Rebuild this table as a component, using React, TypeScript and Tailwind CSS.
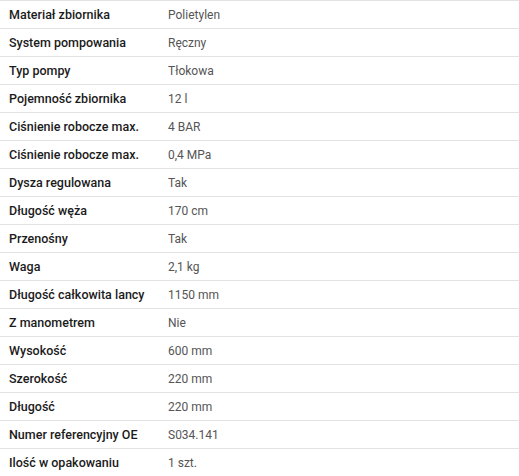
const specs: [string, string][] = [
  ["Materiał zbiornika", "Polietylen"],
  ["System pompowania", "Ręczny"],
  ["Typ pompy", "Tłokowa"],
  ["Pojemność zbiornika", "12 l"],
  ["Ciśnienie robocze max.", "4 BAR"],
  ["Ciśnienie robocze max.", "0,4 MPa"],
  ["Dysza regulowana", "Tak"],
  ["Długość węża", "170 cm"],
  ["Przenośny", "Tak"],
  ["Waga", "2,1 kg"],
  ["Długość całkowita lancy", "1150 mm"],
  ["Z manometrem", "Nie"],
  ["Wysokość", "600 mm"],
  ["Szerokość", "220 mm"],
  ["Długość", "220 mm"],
  ["Numer referencyjny OE", "S034.141"],
  ["Ilość w opakowaniu", "1 szt."],
]

export default function App() {
  return (
    <div className="w-[519px] bg-white font-['Roboto',sans-serif] text-[12px]">
      {specs.map(([label, value], i) => (
        <div key={i} className="grid h-[28px] grid-cols-[159px_1fr] items-center border-t border-[#e3e3e3]">
          <div className="pl-[9px] pt-px text-[12.5px] leading-[16px] font-medium text-[#1b1b1b]">{label}</div>
          <div className="pl-[9px] leading-[16px] text-[#555]">{value}</div>
        </div>
      ))}
    </div>
  )
}
